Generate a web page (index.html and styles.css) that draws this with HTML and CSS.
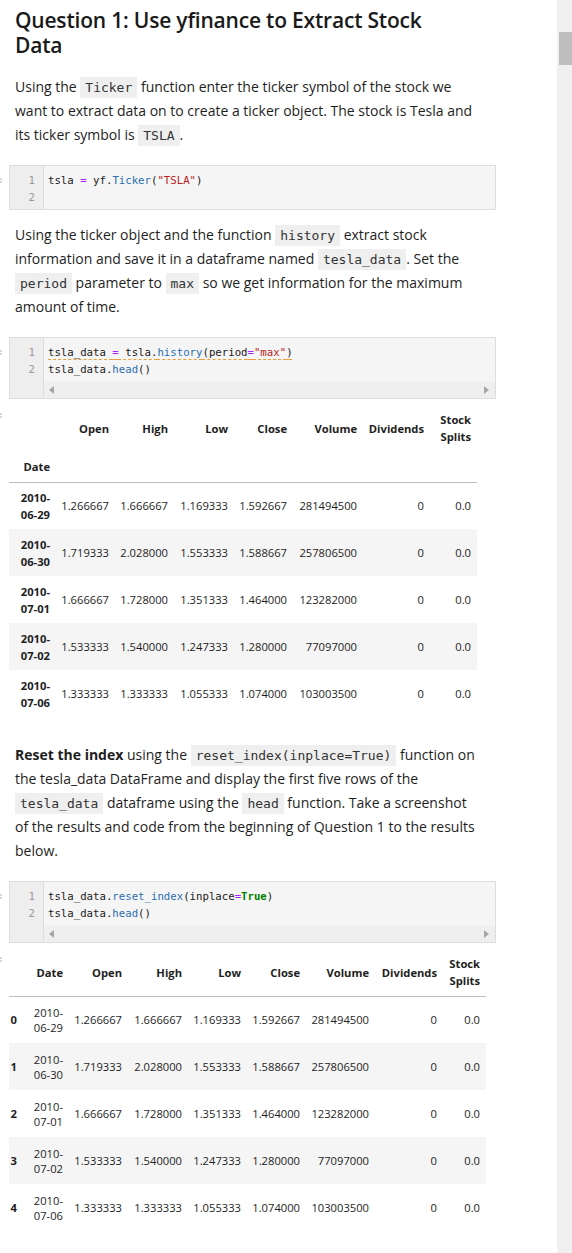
FILE: index.html
```html
<!DOCTYPE html>
<html lang="en">
<head>
<meta charset="utf-8">
<title>Question 1: Use yfinance to Extract Stock Data</title>
<link rel="stylesheet" href="styles.css">
</head>
<body>
<div class="app">
  <main class="nb">
    <section class="cell">
      <div class="handle"></div>
      <div class="md">
        <h2>Question 1: Use yfinance to Extract Stock Data</h2>
        <p>Using the <code>Ticker</code> function enter the ticker symbol of the stock we want to extract data on to create a ticker object. The stock is Tesla and its ticker symbol is <code>TSLA</code>.</p>
      </div>
    </section>

    <section class="cell">
      <div class="handle"><i class="mark"></i></div>
      <div class="code">
        <div class="gutter"><span>1</span><span>2</span></div>
        <div class="src">
          <div class="line">tsla <span class="op">=</span> yf.<span class="prop">Ticker</span>(<span class="str">"TSLA"</span>)</div>
          <div class="line"></div>
        </div>
      </div>
    </section>

    <section class="cell">
      <div class="handle"></div>
      <div class="md md-tight">
        <p>Using the ticker object and the function <code>history</code> extract stock information and save it in a dataframe named <code>tesla_data</code>. Set the <code>period</code> parameter to <code>max</code> so we get information for the maximum amount of time.</p>
      </div>
    </section>

    <section class="cell">
      <div class="handle"><i class="mark"></i></div>
      <div class="code">
        <div class="gutter"><span>1</span><span>2</span></div>
        <div class="src">
          <div class="line"><span class="warn">tsla_data <span class="op">=</span> tsla.<span class="prop">history</span>(period<span class="op">=</span><span class="str">"max"</span>)</span></div>
          <div class="line">tsla_data.<span class="prop">head</span>()</div>
          <div class="hscroll">
            <svg width="5" height="8" viewBox="0 0 5 8"><polygon points="5,0 5,8 0,4" fill="#a6a6a6"/></svg>
            <svg width="5" height="8" viewBox="0 0 5 8"><polygon points="0,0 0,8 5,4" fill="#a6a6a6"/></svg>
          </div>
        </div>
      </div>
    </section>

    <section class="cell out">
      <div class="handle"><i class="mark"></i></div>
      <div class="output">
        <table class="df df1">
          <colgroup><col><col><col><col><col><col><col><col></colgroup>
          <thead>
            <tr class="names"><th></th><th>Open</th><th>High</th><th>Low</th><th>Close</th><th>Volume</th><th>Dividends</th><th>Stock Splits</th></tr>
            <tr class="idxname"><th>Date</th><th></th><th></th><th></th><th></th><th></th><th></th><th></th></tr>
          </thead>
          <tbody>
            <tr><th>2010-<wbr>06-29</th><td>1.266667</td><td>1.666667</td><td>1.169333</td><td>1.592667</td><td>281494500</td><td>0</td><td>0.0</td></tr>
            <tr><th>2010-<wbr>06-30</th><td>1.719333</td><td>2.028000</td><td>1.553333</td><td>1.588667</td><td>257806500</td><td>0</td><td>0.0</td></tr>
            <tr><th>2010-<wbr>07-01</th><td>1.666667</td><td>1.728000</td><td>1.351333</td><td>1.464000</td><td>123282000</td><td>0</td><td>0.0</td></tr>
            <tr><th>2010-<wbr>07-02</th><td>1.533333</td><td>1.540000</td><td>1.247333</td><td>1.280000</td><td>77097000</td><td>0</td><td>0.0</td></tr>
            <tr><th>2010-<wbr>07-06</th><td>1.333333</td><td>1.333333</td><td>1.055333</td><td>1.074000</td><td>103003500</td><td>0</td><td>0.0</td></tr>
          </tbody>
        </table>
      </div>
    </section>

    <section class="cell">
      <div class="handle"></div>
      <div class="md md-after-out">
        <p><strong>Reset the index</strong> using the <code>reset_index(inplace=True)</code> function on the tesla_data DataFrame and display the first five rows of the <code>tesla_data</code> dataframe using the <code>head</code> function. Take a screenshot of the results and code from the beginning of Question 1 to the results below.</p>
      </div>
    </section>

    <section class="cell">
      <div class="handle"><i class="mark"></i></div>
      <div class="code">
        <div class="gutter"><span>1</span><span>2</span></div>
        <div class="src">
          <div class="line">tsla_data.<span class="prop">reset_index</span>(inplace<span class="op">=</span><span class="kw">True</span>)</div>
          <div class="line">tsla_data.<span class="prop">head</span>()</div>
          <div class="hscroll">
            <svg width="5" height="8" viewBox="0 0 5 8"><polygon points="5,0 5,8 0,4" fill="#a6a6a6"/></svg>
            <svg width="5" height="8" viewBox="0 0 5 8"><polygon points="0,0 0,8 5,4" fill="#a6a6a6"/></svg>
          </div>
        </div>
      </div>
    </section>

    <section class="cell out">
      <div class="handle"><i class="mark"></i></div>
      <div class="output">
        <table class="df df2">
          <colgroup><col><col><col><col><col><col><col><col><col></colgroup>
          <thead>
            <tr class="names"><th></th><th>Date</th><th>Open</th><th>High</th><th>Low</th><th>Close</th><th>Volume</th><th>Dividends</th><th>Stock Splits</th></tr>
          </thead>
          <tbody>
            <tr><th>0</th><td class="date">2010-<wbr>06-29</td><td>1.266667</td><td>1.666667</td><td>1.169333</td><td>1.592667</td><td>281494500</td><td>0</td><td>0.0</td></tr>
            <tr><th>1</th><td class="date">2010-<wbr>06-30</td><td>1.719333</td><td>2.028000</td><td>1.553333</td><td>1.588667</td><td>257806500</td><td>0</td><td>0.0</td></tr>
            <tr><th>2</th><td class="date">2010-<wbr>07-01</td><td>1.666667</td><td>1.728000</td><td>1.351333</td><td>1.464000</td><td>123282000</td><td>0</td><td>0.0</td></tr>
            <tr><th>3</th><td class="date">2010-<wbr>07-02</td><td>1.533333</td><td>1.540000</td><td>1.247333</td><td>1.280000</td><td>77097000</td><td>0</td><td>0.0</td></tr>
            <tr><th>4</th><td class="date">2010-<wbr>07-06</td><td>1.333333</td><td>1.333333</td><td>1.055333</td><td>1.074000</td><td>103003500</td><td>0</td><td>0.0</td></tr>
          </tbody>
        </table>
      </div>
    </section>
  </main>
  <div class="vscroll"><div class="thumb"></div></div>
</div>
</body>
</html>
```

FILE: styles.css
```css
* { box-sizing: border-box; }

html, body {
  margin: 0;
  padding: 0;
  background: #ffffff;
}

body {
  font-family: "Open Sans", "Noto Sans", sans-serif;
  color: #1e1e1e;
}

.app {
  display: flex;
  height: 1253px;
  overflow: hidden;
}

.nb {
  width: 557px;
  flex: none;
  padding-top: 7px;
}

.vscroll {
  flex: 1;
  background: #f0f0f0;
  padding: 32px 0 0 2px;
}

.thumb {
  height: 33px;
  background: #bebebe;
}

/* cells */
.cell {
  display: flex;
}

.handle {
  width: 9px;
  flex: none;
}

.mark {
  display: block;
  width: 2px;
  height: 2px;
  margin-top: 13px;
  background: #d6d6d6;
  box-shadow: 0 3px 0 #d6d6d6;
}

.out .mark {
  margin-top: 14px;
}

/* markdown */
.md {
  width: 468px;
  padding-left: 6px;
}

.md h2 {
  margin: 0 0 17px;
  padding-top: 1px;
  padding-right: 10px;
  font-size: 21px;
  line-height: 25px;
  font-weight: 600;
  letter-spacing: -0.2px;
  color: #1a1a1a;
}

.md p {
  margin: 0 0 18px;
  font-size: 14px;
  line-height: 24px;
}

.md-tight p { margin-top: 13px; }
.md-after-out p { margin-top: 26px; }

.md code {
  font-family: "DejaVu Sans Mono", "Liberation Mono", monospace;
  font-size: 13px;
  line-height: 1;
  background: #efefef;
  color: #333333;
  padding: 3px 5px;
}

.md strong { font-weight: 700; }

/* code cells */
.code {
  width: 487px;
  display: flex;
  border: 1px solid #dedede;
  background: #f5f5f5;
}

.gutter {
  width: 34px;
  flex: none;
  display: flex;
  flex-direction: column;
  align-items: flex-end;
  padding: 6px 8px 3px 0;
  background: #eeeeee;
  border-right: 1px solid #dddddd;
  font-family: "DejaVu Sans Mono", "Liberation Mono", monospace;
  font-size: 10.7px;
  line-height: 17px;
  color: #999999;
}

.src {
  flex: 1;
  padding: 6px 0 0 0;
  font-family: "DejaVu Sans Mono", "Liberation Mono", monospace;
  font-size: 10.7px;
  line-height: 17px;
  color: #202020;
}

.line {
  height: 17px;
  padding-left: 4px;
  white-space: pre;
}

.hscroll {
  margin-top: 4px;
  height: 16px;
  background: #efefef;
  display: flex;
  justify-content: space-between;
  align-items: center;
  padding: 0 6px 0 5px;
}

.hscroll svg { display: block; }

.op { color: #aa22ff; }
.prop { color: #2a6fb0; }
.str { color: #ba2121; }
.kw { color: #008000; font-weight: 700; }
.warn {
  text-decoration: underline dashed #e8a03c;
  text-underline-offset: 3px;
  text-decoration-thickness: 1px;
}

/* outputs */
.output {
  padding-top: 6px;
}

.df {
  border-collapse: collapse;
  table-layout: fixed;
  font-size: 11.2px;
  color: #1e1e1e;
}

.df th, .df td {
  padding: 0 6px 0 2px;
  text-align: right;
  vertical-align: middle;
  white-space: normal;
}

.df th { font-weight: 700; line-height: 17px; }
.df td { line-height: 15px; }

.df tbody tr { height: 47px; }
.df tbody tr:nth-child(even) { background: #f5f5f5; }

.df1 .names { height: 46px; }
.df1 .idxname { height: 31px; }
.df1 .idxname th { border-bottom: 1px solid #bdbdbd; }

.df2 .names { height: 47px; }
.df2 .names th { border-bottom: 1px solid #bdbdbd; }

.df1 { width: 468px; }
.df1 col:nth-child(1) { width: 47px; }
.df1 col:nth-child(2) { width: 59px; }
.df1 col:nth-child(3) { width: 59px; }
.df1 col:nth-child(4) { width: 60px; }
.df1 col:nth-child(5) { width: 59px; }
.df1 col:nth-child(6) { width: 70px; }
.df1 col:nth-child(7) { width: 67px; }
.df1 col:nth-child(8) { width: 47px; }

.df2 { width: 477px; }
.df2 col:nth-child(1) { width: 14px; }
.df2 col:nth-child(2) { width: 46px; }
.df2 col:nth-child(3) { width: 59px; }
.df2 col:nth-child(4) { width: 60px; }
.df2 col:nth-child(5) { width: 59px; }
.df2 col:nth-child(6) { width: 59px; }
.df2 col:nth-child(7) { width: 69px; }
.df2 col:nth-child(8) { width: 68px; }
.df2 col:nth-child(9) { width: 43px; }

.df2 tbody th { padding-right: 6px; padding-left: 0; }
.df2 .date { font-weight: 400; }
```
